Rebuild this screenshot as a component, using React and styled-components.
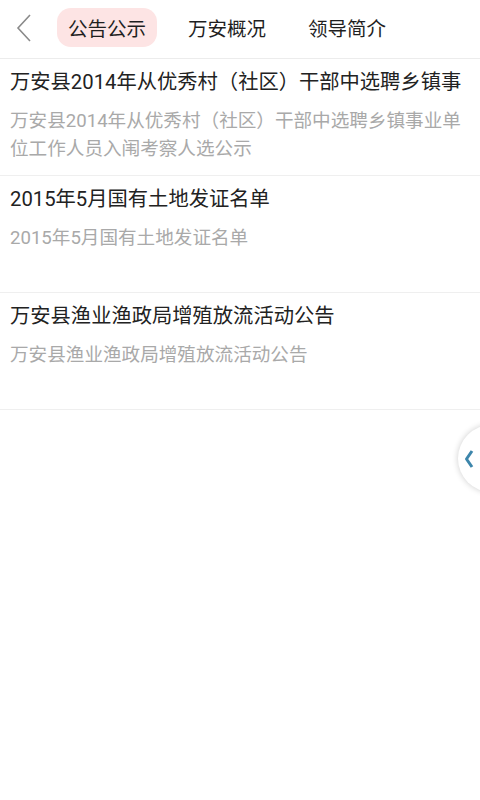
import React from "react";
import styled, { createGlobalStyle } from "styled-components";

const Global = createGlobalStyle`
  html, body { margin: 0; padding: 0; background: #fff; }
  body { font-family: Roboto, "Noto Sans CJK SC", "Noto Sans", sans-serif; }
  * { box-sizing: border-box; }
`;

const Page = styled.div`
  position: relative;
  width: 480px;
  height: 800px;
  background: #fff;
  overflow: hidden;
`;

const Header = styled.div`
  display: flex;
  align-items: center;
  height: 59px;
  padding: 0 0 3px 12px;
  border-bottom: 1px solid #ececec;
`;

const Back = styled.div`
  width: 24px;
  height: 30px;
  display: flex;
  align-items: center;
  justify-content: center;
  margin-right: 21px;
`;

const Tabs = styled.div`
  display: flex;
  align-items: center;
  gap: 20px;
`;

const Tab = styled.div`
  height: 39px;
  padding: 0 11px;
  border-radius: 14px;
  display: flex;
  align-items: center;
  font-size: 19.5px;
  color: #1f1f1f;
  background: ${(p) => (p.$active ? "#fde4e4" : "transparent")};
`;

const List = styled.div`
  display: flex;
  flex-direction: column;
`;

const Item = styled.div`
  min-height: 117px;
  padding: 8px 10px 12px 10px;
  border-bottom: 1px solid #efefef;
`;

const Title = styled.div`
  font-size: 20.3px;
  line-height: 30px;
  color: #222;
  white-space: nowrap;
  overflow: hidden;
`;

const Summary = styled.div`
  margin-top: 10px;
  font-size: 18.6px;
  line-height: 28px;
  color: #a9a9a9;
`;

const SideHandle = styled.div`
  position: absolute;
  right: -45px;
  top: 425px;
  width: 67px;
  height: 67px;
  border-radius: 50%;
  background: #fff;
  box-shadow: 0 0 6px rgba(0, 0, 0, 0.2);
  display: flex;
  align-items: center;
  padding-left: 6px;
`;

const items = [
  {
    title: "万安县2014年从优秀村（社区）干部中选聘乡镇事",
    summary: "万安县2014年从优秀村（社区）干部中选聘乡镇事业单位工作人员入闱考察人选公示",
  },
  { title: "2015年5月国有土地发证名单", summary: "2015年5月国有土地发证名单" },
  { title: "万安县渔业渔政局增殖放流活动公告", summary: "万安县渔业渔政局增殖放流活动公告" },
];

export default function App() {
  return (
    <Page>
      <Global />
      <Header>
        <Back>
          <svg width="16" height="28" viewBox="0 0 16 28">
            <path d="M14 1 L2 14 L14 27" fill="none" stroke="#8a8a8a" strokeWidth="1.6" />
          </svg>
        </Back>
        <Tabs>
          <Tab $active>公告公示</Tab>
          <Tab>万安概况</Tab>
          <Tab>领导简介</Tab>
        </Tabs>
      </Header>
      <List>
        {items.map((it, i) => (
          <Item key={i}>
            <Title>{it.title}</Title>
            <Summary>{it.summary}</Summary>
          </Item>
        ))}
      </List>
      <SideHandle>
        <svg width="10" height="20" viewBox="0 0 10 20">
          <path d="M8 2 L2.5 10 L8 18" fill="none" stroke="#3d86ab" strokeWidth="3" strokeLinejoin="round" />
        </svg>
      </SideHandle>
    </Page>
  );
}
